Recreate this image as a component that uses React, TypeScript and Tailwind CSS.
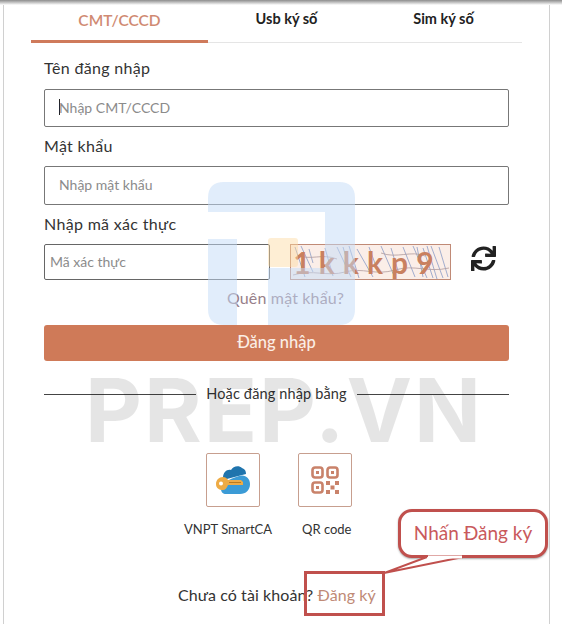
import React from "react";
import { FaSync } from "react-icons/fa";

const CloudKeyIcon = () => (
  <svg width="36" height="30" viewBox="0 0 36 30" fill="none">
    <path d="M8 13C8 7 12 4 16 5C18 1 24 0 27 3C30 4 31 6 31 9L8 15Z" fill="#1f74ad" />
    <path d="M6 24C6 19 14 14 24 11C30 9 35 13 35 19C35 25 31 29 25 29H11C8 29 6 27 6 24Z" fill="#3b9bd6" />
    <path d="M1 19C1 15 4 12 8 12C10 12 12 13 13 15H26L28 17V20H13C12 23 10 25 8 25C4 25 1 23 1 19Z" fill="#eeab45" />
    <circle cx="6" cy="18.5" r="2" fill="#fff" />
    <path d="M14 17.5H26" stroke="#b97a1f" strokeWidth="1" />
  </svg>
);

const QrIcon = () => (
  <svg width="28" height="28" viewBox="0 0 28 28" fill="none" stroke="#c9826a" strokeWidth="2.6">
    <rect x="1.5" y="1.5" width="10" height="10" rx="2.5" />
    <rect x="16.5" y="1.5" width="10" height="10" rx="2.5" />
    <rect x="1.5" y="16.5" width="10" height="10" rx="2.5" />
    <rect x="5" y="5" width="3" height="3" fill="#c9826a" stroke="none" />
    <rect x="20" y="5" width="3" height="3" fill="#c9826a" stroke="none" />
    <rect x="5" y="20" width="3" height="3" fill="#c9826a" stroke="none" />
    <path d="M15 15h4v4h-4zM24 15h4v4h-4zM19.5 19.5h4v4h-4zM15 24h4v4h-4zM24 24h4v4h-4z" fill="#c9826a" stroke="none" />
  </svg>
);

const CaptchaNoise = () => (
  <svg className="absolute inset-0" width="160" height="35" viewBox="0 0 160 35" fill="none" stroke="#8a9cc6" strokeWidth="0.8">
    <path d="M4 2l10 30M10 1l12 26M18 4l4 14M34 3l8 28M46 2l14 30M52 2l6 20M58 1l10 32M66 4l16 28M78 2l8 22M90 1l14 32M100 3l8 26M112 2l12 30M122 1l14 32M132 3l10 30M140 1l12 32M148 2l9 30M126 2l6 30M136 1l10 33" />
    <path d="M2 30c20-6 34 2 52-3s30 4 50-2 32 3 54-2M6 10c14 6 24-2 40 4M90 8c16 6 30-3 44 3" stroke="#b09a9d" />
  </svg>
);

const PrepWatermark = () => (
  <div className="pointer-events-none absolute inset-0 z-10">
    <svg className="absolute left-[208px] top-[182px]" width="147" height="143" viewBox="0 0 147 143" fill="none">
      <path d="M16 0H131Q147 0 147 16V127Q147 143 131 143H60V86H117V30H0V16Q0 0 16 0Z" fill="#c3dbf7" fillOpacity="0.5" />
      <path d="M0 57H29V143H16Q0 143 0 127Z" fill="#c3dbf7" fillOpacity="0.5" />
      <rect x="60" y="56" width="30" height="29" rx="3" fill="#fcd9a0" fillOpacity="0.45" />
    </svg>
    <div className="absolute left-[85px] top-[362px] font-['Inter',sans-serif] text-[88px] font-bold leading-[96px] tracking-[0.022em] text-black/10">
      PREP.VN
    </div>
  </div>
);

const CalloutArrow = () => (
  <svg className="absolute left-[384px] top-[550px]" width="84" height="28" viewBox="0 0 84 28" fill="none">
    <path d="M0 23L43 7H79Z" fill="#fff" />
    <path d="M0 23L43 7M0 23L79 7" stroke="#c0504d" strokeWidth="2" />
    <path d="M44 7H78" stroke="#fff" strokeWidth="3" />
  </svg>
);

export default function App() {
  return (
    <div className="relative h-[624px] w-[562px] overflow-hidden bg-white font-['Lato',sans-serif] text-[#333]">
      <div className="h-[5px] bg-gradient-to-b from-[#8d8d8d] to-white" />
      <div className="mx-[3px] h-[619px] w-[547px] border-x border-[#d0d0d0] px-[27px]">
        <div className="flex h-[38px] w-[491px] border-b border-[#e5e5e5] text-[15px] font-bold">
          <div className="flex h-[38px] w-[177px] items-start justify-center border-b-[3px] border-[#cf7a5b] pt-[4px] text-[15.5px] font-semibold text-[#d08a72]">
            CMT/CCCD
          </div>
          <div className="flex w-[157px] justify-center pt-[3px] text-[14.5px] text-[#222]">Usb ký số</div>
          <div className="flex w-[157px] justify-center pt-[3px] text-[14.5px] text-[#222]">Sim ký số</div>
        </div>

        <div className="ml-[13px] w-[465px]">
          <div className="mt-[14px] text-[16px] leading-[22px] tracking-[0.02em]">Tên đăng nhập</div>
          <div className="mt-[10px] flex h-[38px] items-center rounded-[2px] border border-[#777] pb-[2px] pl-[14px] text-[14px] text-[#8b8b8b]">
            <span className="mr-[-1px] h-[16px] w-px bg-[#222]" />
            Nhập CMT/CCCD
          </div>

          <div className="mt-[8px] text-[16px] leading-[22px] tracking-[0.02em]">Mật khẩu</div>
          <div className="mt-[9px] flex h-[39px] items-center rounded-[2px] border border-[#777] pb-[2px] pl-[14px] text-[14px] text-[#8b8b8b]">
            Nhập mật khẩu
          </div>

          <div className="mt-[8px] text-[16px] leading-[22px] tracking-[0.02em]">Nhập mã xác thực</div>
          <div className="mt-[9px] flex h-[36px] items-center">
            <div className="flex h-[36px] w-[226px] items-center rounded-[2px] border border-[#666] pb-[2px] pl-[5px] text-[14px] text-[#8b8b8b]">
              Mã xác thực
            </div>
            <div className="relative ml-[20px] flex h-[36px] w-[161px] items-center justify-center border border-[#c08a76] bg-[#fbeee8] pr-[6px] font-['Lato',sans-serif] text-[30px] font-bold tracking-[0.27em] text-[#c9805f]">
              <CaptchaNoise />
              <span className="relative">1kkkp9</span>
            </div>
            <FaSync className="mb-[8px] ml-[20px] text-[25px] text-[#222]" />
          </div>

          <div className="mt-[8px] pl-[18px] text-center text-[16px] leading-[20px] tracking-[0.01em] text-[#97808a]">Quên mật khẩu?</div>

          <div className="mt-[17px] flex h-[36px] items-center justify-center rounded-[3px] bg-[#cf7a58] pb-[2px] text-[16.5px] font-medium text-[#fbeee6]">
            Đăng nhập
          </div>

          <div className="mt-[23px] flex items-center text-[14.5px] leading-[20px] tracking-[0.01em]">
            <div className="h-px flex-1 bg-[#444]" />
            <span className="w-[161px] whitespace-nowrap text-center">Hoặc đăng nhập bằng</span>
            <div className="h-px flex-1 bg-[#444]" />
          </div>

          <div className="mt-[49px] flex pl-[162px]">
            <div className="flex h-[54px] w-[54px] items-center justify-center rounded-[2px] border border-[#c79f8f]">
              <CloudKeyIcon />
            </div>
            <div className="ml-[38px] flex h-[54px] w-[54px] items-center justify-center rounded-[2px] border border-[#c79f8f]">
              <QrIcon />
            </div>
          </div>

          <div className="mt-[13px] flex text-[13px] leading-[18px]">
            <span className="ml-[140px] w-[88px] whitespace-nowrap">VNPT SmartCA</span>
            <span className="ml-[30px]">QR code</span>
          </div>

          <div className="mt-[46px] pl-[134px] text-[16px] leading-[22px] tracking-[0.005em]">
            Chưa có tài khoản? <span className="text-[#c08a76]">Đăng ký</span>
          </div>
        </div>
      </div>

      <PrepWatermark />

      <div className="absolute left-[304px] top-[571px] z-20 h-[45px] w-[81px] border-[3px] border-[#c0504d]" />
      <div className="absolute left-[398px] top-[509px] z-20 flex h-[49px] w-[150px] items-center justify-center rounded-[14px] border-[3px] border-[#c0504d] bg-white text-[19px] text-[#c9595c] shadow-[0_1px_2px_rgba(0,0,0,0.35)]">
        Nhấn Đăng ký
      </div>
      <div className="absolute inset-0 z-30">
        <CalloutArrow />
      </div>
    </div>
  );
}
